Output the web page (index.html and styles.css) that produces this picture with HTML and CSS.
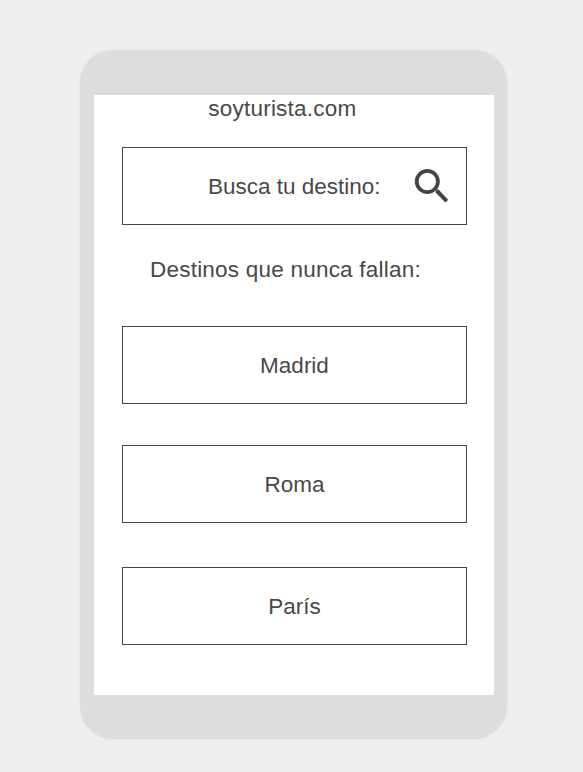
FILE: index.html
```html
<!DOCTYPE html>
<html lang="es">
<head>
<meta charset="utf-8">
<title>soyturista.com</title>
<link rel="stylesheet" href="styles.css">
</head>
<body>
<div class="phone">
  <main class="screen">
    <h1 class="site">soyturista.com</h1>
    <div class="box search">
      <span>Busca tu destino:</span>
      <svg class="icon" viewBox="0 0 36 36" aria-hidden="true">
        <circle cx="14.3" cy="13.5" r="10.6" fill="none" stroke="#444" stroke-width="3.8"/>
        <path d="M22.6 24.5v-1.7l1.2-1.2h1.7l9.7 10.1-2.8 2.8z" fill="#444"/>
      </svg>
    </div>
    <h2 class="heading">Destinos que nunca fallan:</h2>
    <div class="box madrid">Madrid</div>
    <div class="box roma">Roma</div>
    <div class="box paris">París</div>
  </main>
</div>
</body>
</html>
```

FILE: styles.css
```css
* { box-sizing: border-box; }
body {
  margin: 0;
  height: 772px;
  padding: 50px 0 0 80px;
  background: #eee;
  color: #484848;
  font: 22.5px/28px "Liberation Sans", Arial, sans-serif;
  overflow: hidden;
}
.phone {
  width: 427px;
  height: 689px;
  padding: 45px 13px 44px 14px;
  border-radius: 33px;
  background: #ddd;
  box-shadow: 0 0 0 1px #e9e9e9;
}
.screen {
  display: flex;
  flex-direction: column;
  height: 600px;
  padding: 0 27px 0 28px;
  background: #fff;
}
.site, .heading { margin: 0; font: inherit; letter-spacing: .22px; white-space: nowrap; }
.site { padding-left: 86.3px; height: 52px; }
.box {
  display: flex;
  align-items: center;
  justify-content: center;
  height: 78px;
  border: 1px solid #444;
  flex: none;
}
.box { padding-top: 1px; }
.search { justify-content: space-between; padding: 0 17px 0 85px; }
.search span { padding-top: 1px; }
.icon { width: 36px; height: 36px; }
.heading { padding-left: 28px; margin: 31px 0 42px; }
.roma { margin-top: 41px; }
.paris { margin-top: 44px; }
```
